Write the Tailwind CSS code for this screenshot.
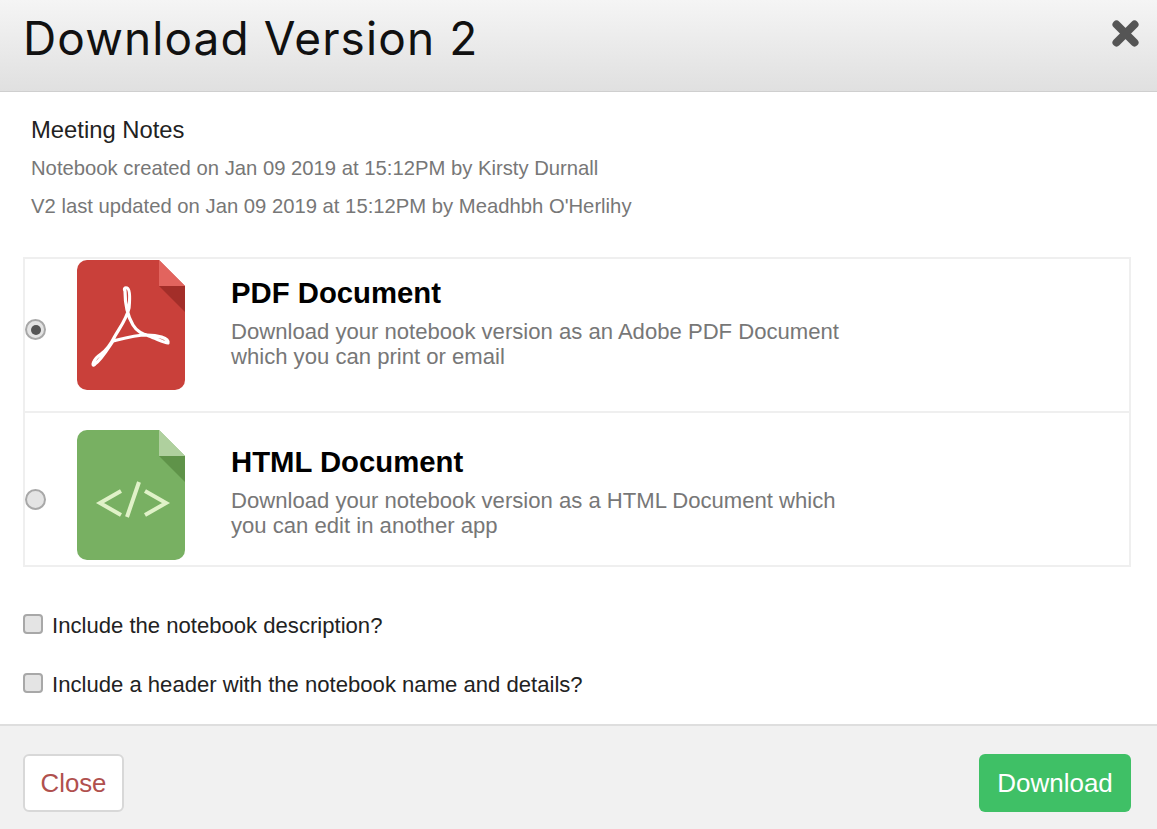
<!DOCTYPE html>
<html lang="en">
<head>
    <meta charset="UTF-8">
    <meta name="viewport" content="width=device-width, initial-scale=1.0">
    <title>Download Version 2</title>
    <script src="https://cdn.jsdelivr.net/npm/@tailwindcss/browser@4"></script>
</head>
<body class="bg-white font-['Liberation_Sans',Arial,sans-serif] overflow-hidden">
    <div class="w-[1157px] h-[829px] flex flex-col">
        <!-- header -->
        <div class="h-[92px] shrink-0 flex items-start justify-between pl-[23px] pr-[17px] border-b border-[#cfcfcf] bg-gradient-to-b from-[#f5f5f5] to-[#e0e0e0]">
            <h1 class="font-['Inter',sans-serif] font-normal text-[46px] leading-[76px] tracking-[1.1px] text-[#111]">Download Version 2</h1>
            <svg class="mt-[19px]" width="29" height="29" viewBox="0 0 29 29"><path d="M5.5 5.5 L23.5 23.5 M23.5 5.5 L5.5 23.5" stroke="#555" stroke-width="8" stroke-linecap="round"/></svg>
        </div>

        <!-- notebook details -->
        <div class="pl-[31px] pt-[25px] h-[165px] shrink-0">
            <p class="text-[23.8px] leading-[26px] text-[#222]">Meeting Notes</p>
            <p class="mt-[12px] text-[20.25px] leading-[26px] text-[#777]">Notebook created on Jan 09 2019 at 15:12PM by Kirsty Durnall</p>
            <p class="mt-[12px] text-[20.25px] leading-[26px] text-[#777]">V2 last updated on Jan 09 2019 at 15:12PM by Meadhbh O'Herlihy</p>
        </div>

        <!-- format options -->
        <div class="mx-[23px] w-[1108px] border-2 border-[#efefef]">
            <div class="h-[154px] flex border-b-2 border-[#efefef]">
                <div class="w-[52px] shrink-0 flex items-center pb-[11px]">
                    <span class="w-[21px] h-[21px] rounded-full border-2 border-[#a8a8a8] bg-[#e4e4e4] flex items-center justify-center"><span class="w-[10px] h-[10px] rounded-full bg-[#555]"></span></span>
                </div>
                <svg class="mt-[1px] shrink-0" width="108" height="130" viewBox="0 0 108 130">
                    <path d="M10 0 H82 L108 26 V120 A10 10 0 0 1 98 130 H10 A10 10 0 0 1 0 120 V10 A10 10 0 0 1 10 0Z" fill="#c9403a"/>
                    <path d="M82 26 H108 V52Z" fill="#a32e29"/>
                    <path d="M82 0 L108 26 H82Z" fill="#e2645e"/>
                    <path d="M48 31 C48 45 50 55 56 65 C60 72 66 74 72 76 C80 79 90 84 91 83 C92 78 80 75 70 75 C58 75 44 79 36 81 C30 90 24 100 18 104 C14 108 16 99 24 94 C30 90 34 84 38 76 C44 66 50 58 52 48 C53 38 53 29 50 28 C47 27 47 30 48 31Z" fill="none" stroke="#fff" stroke-width="3.2" stroke-linejoin="round"/>
                </svg>
                <div class="pl-[46px] pt-[16px]">
                    <h2 class="text-[29.3px] leading-[36px] font-bold text-black">PDF Document</h2>
                    <p class="mt-[8px] text-[22.1px] leading-[25px] text-[#777]">Download your notebook version as an Adobe PDF Document<br>which you can print or email</p>
                </div>
            </div>
            <div class="h-[152px] flex">
                <div class="w-[52px] shrink-0 flex items-center pt-[20px]">
                    <span class="w-[21px] h-[21px] rounded-full border-2 border-[#a8a8a8] bg-[#e4e4e4]"></span>
                </div>
                <svg class="mt-[17px] shrink-0" width="108" height="130" viewBox="0 0 108 130">
                    <path d="M10 0 H82 L108 26 V120 A10 10 0 0 1 98 130 H10 A10 10 0 0 1 0 120 V10 A10 10 0 0 1 10 0Z" fill="#78b062"/>
                    <path d="M82 26 H108 V52Z" fill="#5f9349"/>
                    <path d="M82 0 L108 26 H82Z" fill="#afd09e"/>
                    <path d="M44 61 L23 73 L44 85 M68 61 L89 73 L68 85 M62 52 L50 87" fill="none" stroke="#e0f2c8" stroke-width="4"/>
                </svg>
                <div class="pl-[46px] pt-[31px]">
                    <h2 class="text-[29.3px] leading-[36px] font-bold text-black">HTML Document</h2>
                    <p class="mt-[8px] text-[22.1px] leading-[25px] text-[#777]">Download your notebook version as a HTML Document which<br>you can edit in another app</p>
                </div>
            </div>
        </div>

        <!-- checkboxes -->
        <div class="pl-[23px] pt-[45px] flex-1">
            <label class="flex items-center gap-[9px] h-[28px]">
                <span class="w-[20px] h-[20px] rounded-[4px] border-2 border-[#a8a8a8] bg-[#e4e4e4] -mt-[4px]"></span>
                <span class="text-[22.1px] text-[#222]">Include the notebook description?</span>
            </label>
            <label class="mt-[31px] flex items-center gap-[9px] h-[28px]">
                <span class="w-[20px] h-[20px] rounded-[4px] border-2 border-[#a8a8a8] bg-[#e4e4e4] -mt-[4px]"></span>
                <span class="text-[22.1px] text-[#222]">Include a header with the notebook name and details?</span>
            </label>
        </div>

        <!-- footer -->
        <div class="h-[105px] shrink-0 flex items-start justify-between pl-[23px] pr-[26px] pt-[28px] border-t-2 border-[#dedede] bg-[#f1f1f1]">
            <button class="w-[101px] h-[58px] rounded-[6px] border-2 border-[#d8d8d8] bg-white text-[25.8px] text-[#b0504e]">Close</button>
            <button class="w-[152px] h-[58px] rounded-[6px] bg-[#3fc066] text-[26px] text-white">Download</button>
        </div>
    </div>
</body>
</html>
